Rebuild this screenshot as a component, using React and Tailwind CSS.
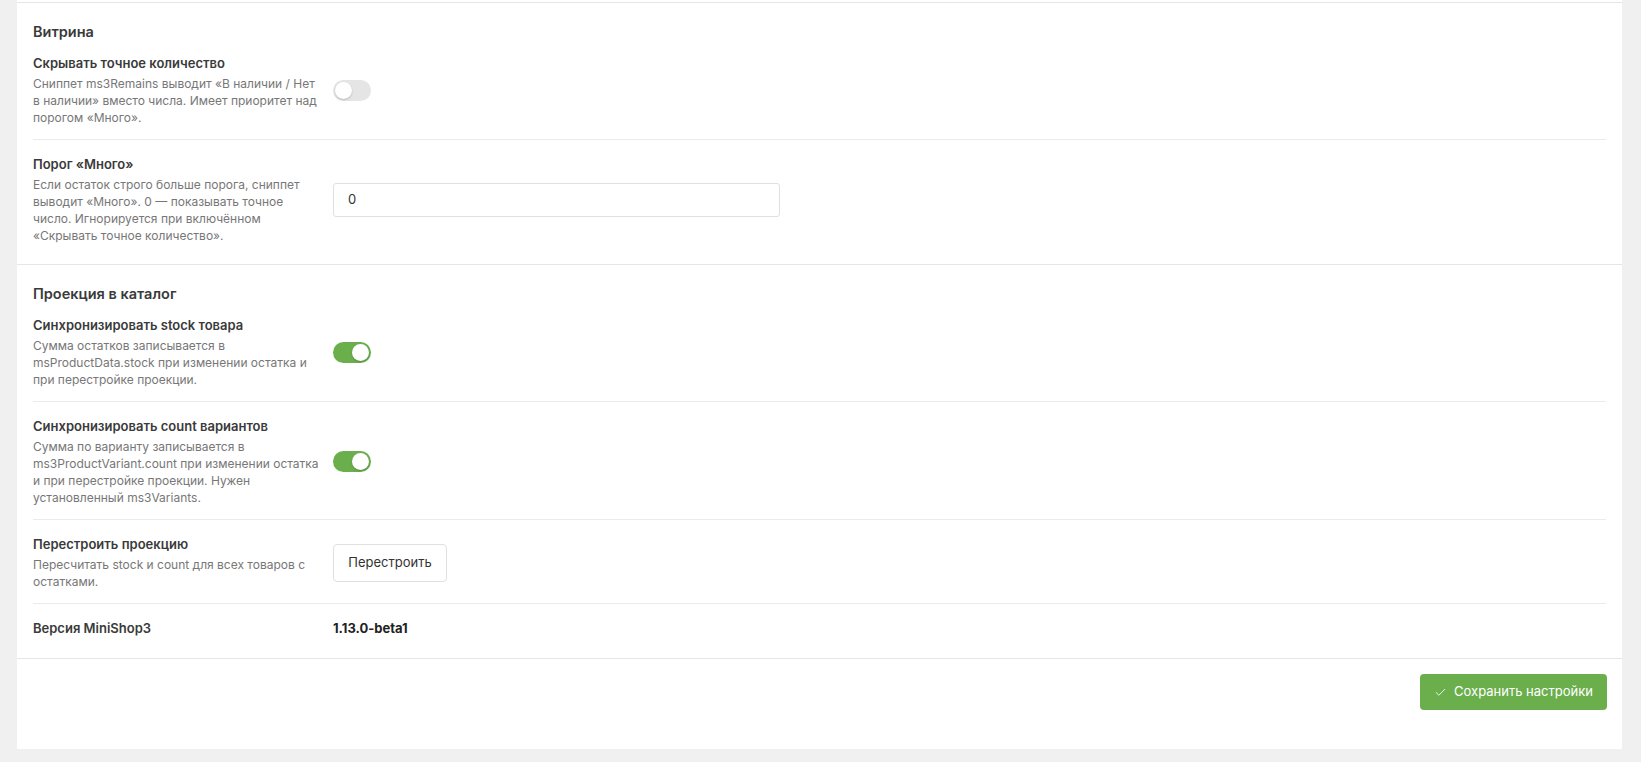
import React from "react";
import { Check } from "lucide-react";

function Toggle({ on }) {
  return (
    <div
      className={
        "relative h-[21px] w-[38px] rounded-full " +
        (on ? "bg-[#6aaf4c]" : "bg-[#e5e5e5]")
      }
    >
      <div
        className={
          "absolute top-[2px] h-[17px] w-[17px] rounded-full bg-white shadow-[0_1px_2px_rgba(0,0,0,0.2)] " +
          (on ? "left-[19px]" : "left-[2px]")
        }
      />
    </div>
  );
}

function Row({ label, desc, children, first, last }) {
  return (
    <div
      className={
        "grid grid-cols-[290px_1fr] items-center gap-x-[10px] " +
        (last ? "pb-[14px] " : "pb-[13px] ") +
        (first ? "pt-[12px]" : "border-t border-[#ebebeb] pt-[15px]")
      }
    >
      <div>
        <div className="text-[13px] font-semibold leading-[18px] text-[#3a3a3a]">
          {label}
        </div>
        {desc && (
          <div className="mt-[3px] text-[12px] leading-[17px] text-[#777]">
            {desc}
          </div>
        )}
      </div>
      <div>{children}</div>
    </div>
  );
}

export default function App() {
  return (
    <div
      className="min-h-[762px] bg-[#f0f0f0] pl-[17px] pb-[14px]"
      style={{ fontFamily: "Inter, 'Noto Sans', sans-serif" }}
    >
      <div className="w-[1605px] bg-white">
        <div className="h-[2px]" />
        {/* Section 1 */}
        <div className="border-t border-[#e6e6e6] px-4 pt-[19px] pb-[7px]">
          <div className="text-[14.5px] font-semibold leading-5 text-[#3a3a3a]">
            Витрина
          </div>
          <Row
            first
            label="Скрывать точное количество"
            desc="Сниппет ms3Remains выводит «В наличии / Нет в наличии» вместо числа. Имеет приоритет над порогом «Много»."
          >
            <Toggle on={false} />
          </Row>
          <Row
            label="Порог «Много»"
            desc="Если остаток строго больше порога, сниппет выводит «Много». 0 — показывать точное число. Игнорируется при включённом «Скрывать точное количество»."
          >
            <div className="flex h-[34px] w-[447px] items-center rounded-[3px] border border-[#e0e0e0] px-[14px] text-[13px] text-[#333]">
              0
            </div>
          </Row>
        </div>
        {/* Section 2 */}
        <div className="border-t border-[#e6e6e6] px-4 pt-[19px] pb-[7px]">
          <div className="text-[14.5px] font-semibold leading-5 text-[#3a3a3a]">
            Проекция в каталог
          </div>
          <Row
            first
            label="Синхронизировать stock товара"
            desc="Сумма остатков записывается в msProductData.stock при изменении остатка и при перестройке проекции."
          >
            <Toggle on />
          </Row>
          <Row
            label="Синхронизировать count вариантов"
            desc="Сумма по варианту записывается в ms3ProductVariant.count при изменении остатка и при перестройке проекции. Нужен установленный ms3Variants."
          >
            <Toggle on />
          </Row>
          <Row
            label="Перестроить проекцию"
            desc="Пересчитать stock и count для всех товаров с остатками."
          >
            <button className="h-[38px] w-[114px] rounded-[4px] border border-[#e0e0e0] bg-white text-[13px] text-[#333]">
              Перестроить
            </button>
          </Row>
          <Row last label="Версия MiniShop3">
            <div className="text-[13px] font-bold leading-[18px] text-[#222]">
              1.13.0-beta1
            </div>
          </Row>
        </div>
        {/* Footer */}
        <div className="flex justify-end border-t border-[#e6e6e6] pt-[15px] pb-[39px] pr-[15px]">
          <button className="flex h-[36px] w-[187px] items-center justify-center gap-[7px] rounded-[4px] bg-[#6aaf4c] text-[13px] text-white">
            <Check size={13} strokeWidth={1.6} />
            Сохранить настройки
          </button>
        </div>
      </div>
    </div>
  );
}
